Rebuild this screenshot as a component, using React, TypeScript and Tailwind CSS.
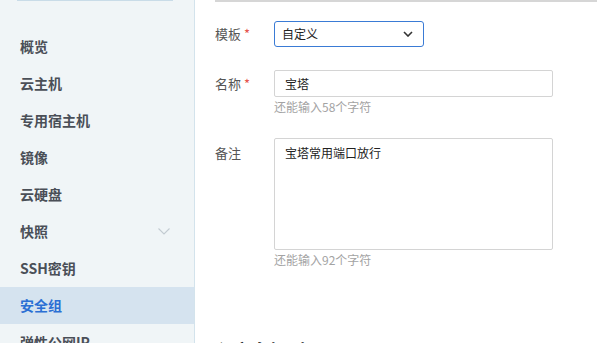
import React from "react";

const navItems = ["概览", "云主机", "专用宿主机", "镜像", "云硬盘", "快照", "SSH密钥", "安全组", "弹性公网IP"];

export default function App() {
  const font = { fontFamily: '"Noto Sans CJK SC", "Noto Sans", sans-serif' };
  return (
    <div className="flex h-[343px] w-[597px] overflow-hidden bg-white" style={font}>
      <aside className="w-[195px] shrink-0 border-r border-[#d3e3ec] bg-[#f0f5f7]">
        <div className="mx-[17px] w-[156px] h-px bg-[#c9dce8]" />
        <ul className="mt-[27px]">
          {navItems.map((n) => {
            const active = n === "安全组";
            return (
              <li
                key={n}
                className={`flex h-[37px] items-center justify-between pl-[20px] pr-[24px] text-[14px] font-bold ${
                  active ? "bg-[#d5e3ef] text-[#2b6fd4]" : "text-[#4a4f57]"
                }`}
              >
                <span>{n}</span>
                {n === "快照" && (
                  <svg width="12" height="7" viewBox="0 0 12 7" fill="none" stroke="#c3cbd2" strokeWidth="1.1">
                    <path d="M0.5 0.5 L6 6 L11.5 0.5" />
                  </svg>
                )}
              </li>
            );
          })}
        </ul>
      </aside>
      <main className="flex-1 pl-[20px]">
        <div className="h-[2px] bg-[#d6d6d6]" />
        <div className="mt-[19px] flex items-center">
          <div className="w-[59px] text-[13px] text-[#555]">
            模板 <span className="text-[#e5534b]">*</span>
          </div>
          <div className="flex h-[26px] w-[150px] items-center justify-between rounded-[3px] border border-[#3a7bd5] pl-[7px] pr-[10px] text-[12px] text-[#222]">
            <span>自定义</span>
            <svg width="10" height="6" viewBox="0 0 10 6" fill="none" stroke="#333" strokeWidth="1.6">
              <path d="M1 1 L5 5 L9 1" />
            </svg>
          </div>
        </div>
        <div className="mt-[23px] flex items-center">
          <div className="w-[59px] text-[13px] text-[#555]">
            名称 <span className="text-[#e5534b]">*</span>
          </div>
          <div className="flex h-[27px] w-[279px] items-center rounded-[2px] border border-[#d4d4d4] pl-[10px] text-[12px] text-[#222]">
            宝塔
          </div>
        </div>
        <div className="ml-[59px] mt-[2px] text-[12px] leading-[16px] text-[#a3a3a3]">还能输入58个字符</div>
        <div className="mt-[23px] flex items-start">
          <div className="w-[59px] pt-[5px] text-[13px] text-[#555]">备注</div>
          <div className="h-[112px] w-[279px] rounded-[2px] border border-[#d4d4d4] pl-[10px] pt-[5px] text-[12px] text-[#222]">
            宝塔常用端口放行
          </div>
        </div>
        <div className="ml-[59px] mt-[2px] text-[12px] leading-[16px] text-[#a3a3a3]">还能输入92个字符</div>
        <div className="mt-[70px] text-[18px] font-bold leading-[24px] text-[#222]">入方向规则</div>
      </main>
    </div>
  );
}
